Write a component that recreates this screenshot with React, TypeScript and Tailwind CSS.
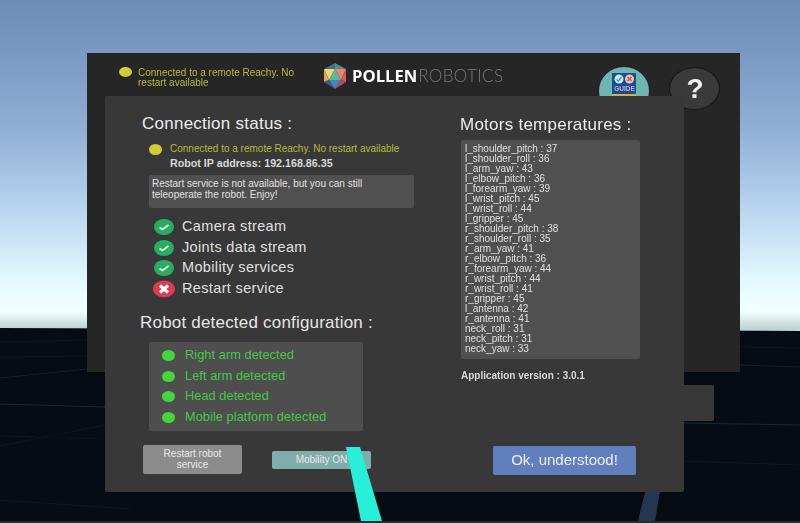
const motors = [
  'l_shoulder_pitch : 37', 'l_shoulder_roll : 36', 'l_arm_yaw : 43', 'l_elbow_pitch : 36',
  'l_forearm_yaw : 39', 'l_wrist_pitch : 45', 'l_wrist_roll : 44', 'l_gripper : 45',
  'r_shoulder_pitch : 38', 'r_shoulder_roll : 35', 'r_arm_yaw : 41', 'r_elbow_pitch : 36',
  'r_forearm_yaw : 44', 'r_wrist_pitch : 44', 'r_wrist_roll : 41', 'r_gripper : 45',
  'l_antenna : 42', 'r_antenna : 41', 'neck_roll : 31', 'neck_pitch : 31', 'neck_yaw : 33',
];

const services = [
  { label: 'Camera stream', ok: true },
  { label: 'Joints data stream', ok: true },
  { label: 'Mobility services', ok: true },
  { label: 'Restart service', ok: false },
];

const parts = ['Right arm detected', 'Left arm detected', 'Head detected', 'Mobile platform detected'];

const StatusIcon = ({ ok }: { ok: boolean }) => (
  <svg width="22" height="18" viewBox="0 0 22 18" className="shrink-0">
    <ellipse cx="11" cy="9" rx={ok ? 10 : 11} ry={ok ? 8 : 8.5} fill={ok ? '#27ae60' : '#dc3c50'} />
    {ok ? (
      <path d="M6.5 9.5 L9.5 11.5 L15.5 7" fill="none" stroke="#f2f2f2" strokeWidth="1.6" />
    ) : (
      <path d="M7 5.5 L15 12.5 M15 5.5 L7 12.5" fill="none" stroke="#ffffff" strokeWidth="3" />
    )}
  </svg>
);

const Logo = () => (
  <svg width="24" height="26" viewBox="0 0 24 26" className="shrink-0">
    <polygon points="12,0 1,6 12,6" fill="#3f6d8c" />
    <polygon points="12,0 23,6 12,6" fill="#4f8f8a" />
    <polygon points="1,6 12,6 6,17" fill="#f3d477" />
    <polygon points="12,6 23,6 18,17" fill="#ee8570" />
    <polygon points="12,6 6,17 18,17" fill="#56b9a0" />
    <polygon points="1,6 6,17 1,19" fill="#e8a25a" />
    <polygon points="23,6 18,17 23,19" fill="#d85a5a" />
    <polygon points="1,19 6,17 12,26" fill="#35608f" />
    <polygon points="6,17 18,17 12,26" fill="#4b82b8" />
    <polygon points="18,17 23,19 12,26" fill="#b84d58" />
  </svg>
);

// the little booklet drawn on the guide button
const GuideMarks = () => (
  <svg width="22" height="10" viewBox="0 0 22 10">
    <circle cx="6" cy="5" r="4.5" fill="#d5e6f0" />
    <path d="M3.5 5.5 L5.5 7 L8.5 3" fill="none" stroke="#3a8fd8" strokeWidth="1.3" />
    <circle cx="16.5" cy="5" r="4.5" fill="#f2c4b4" />
    <path d="M14.5 3 L18.5 7 M18.5 3 L14.5 7" fill="none" stroke="#e04a3a" strokeWidth="1.4" />
  </svg>
);

const SceneGround = () => (
  <svg width="800" height="523" viewBox="0 0 800 523" className="absolute inset-0">
    <polygon points="0,328 800,331 800,523 0,523" fill="#070b13" />
    <path d="M0 378 L87 369" stroke="#151f2c" />
    <path d="M0 404 L105 407" stroke="#1b2838" />
    <path d="M0 446 L105 425" stroke="#0e1520" />
    <path d="M0 436 L105 439" stroke="#0d131d" />
    <path d="M0 500 L130 509" stroke="#10171f" />
    <path d="M0 342 L87 340" stroke="#0e1520" />
    <path d="M0 357 L87 356" stroke="#0e1520" />
    <path d="M684 423 L800 425" stroke="#1b2838" />
    <path d="M684 461 L800 465" stroke="#10171f" />
    <path d="M740 365 L800 367" stroke="#151f2c" />
    <path d="M740 347 L800 348" stroke="#0e1520" />
    <polygon points="645,492 660,492 655,521 638,521" fill="#263650" />
    <rect x="0" y="521" width="800" height="2" fill="#2b2b2b" />
  </svg>
);

export default function App() {
  return (
    <div className="relative w-[800px] h-[523px] overflow-hidden font-['Liberation_Sans',sans-serif] bg-[linear-gradient(180deg,#6c8bb5_0px,#8dabd3_120px,#b4d0ec_200px,#e2f9ff_280px,#f2ffff_312px,#c0d4d4_328px)]">
      <SceneGround />

      {/* back panel */}
      <div className="absolute left-[87px] top-[53px] w-[653px] h-[319px] bg-[#262626] blur-[0.5px]">
        <div className="flex items-start pl-[32px] pt-[10px]">
          <div className="w-[13px] h-[10px] mt-[4px] rounded-[50%] bg-[#cfcf35] shrink-0" />
          <p className="ml-[6px] w-[172px] text-[10px] leading-[10px] mt-[5px] text-[#b9b93b]">
            Connected to a remote Reachy. No restart available
          </p>
          <div className="ml-[13px] flex items-center">
            <Logo />
            <span className="ml-[5px] font-['Open_Sans',sans-serif] font-bold text-[16.6px] leading-[26px] text-white">POLLEN</span>
            <span className="ml-[1px] font-['Lato',sans-serif] font-light text-[17px] leading-[26px] tracking-[0.4px] text-[#7a7a7a]">ROBOTICS</span>
          </div>
          <div className="ml-[96px] mt-[4px] w-[50px] h-[48px] rounded-[50%] bg-[#6fb6b0] flex justify-center pt-[6px] shrink-0">
            <div className="w-[24px] h-[36px] bg-[#0f5299] flex flex-col items-center pt-[1px]">
              <GuideMarks />
              <span className="text-[6.5px] leading-[8px] mt-[1px] font-bold text-[#e7a5c0]">GUIDE</span>
              <span className="w-full h-[2px] mt-[1px] bg-[#e8a93a]" />
            </div>
          </div>
          <div className="ml-[20px] mt-[4px] w-[51px] h-[43px] rounded-[50%] bg-[#3a3a3a] border border-[#151515] flex items-center justify-center font-bold text-[28px] text-[#f0f0f0] shrink-0">
            ?
          </div>
        </div>
      </div>

      {/* small box sticking out behind the main panel */}
      <div className="absolute left-[680px] top-[385px] w-[34px] h-[36px] rounded-[2px] bg-[#383838]" />

      {/* main panel */}
      <div className="absolute left-[105px] top-[96px] w-[579px] h-[396px] rounded-[2px] bg-[#383838] text-[#e6e6e6] blur-[0.5px]">
        <div className="flex h-full">
          <div className="w-[355px] shrink-0 pl-[37px] pt-[18px]">
            <h2 className="text-[17px] leading-[20px] tracking-[0.25px] text-[#ececec]">Connection status :</h2>
            <div className="flex items-center mt-[9px] pl-[7px]">
              <div className="w-[13px] h-[11px] rounded-[50%] bg-[#cfcf35] shrink-0" />
              <span className="ml-[8px] text-[10px] leading-[12px] text-[#b9b93b]">
                Connected to a remote Reachy. No restart available
              </span>
            </div>
            <p className="ml-[28px] mt-[2px] text-[10.7px] leading-[12px] font-bold text-[#d8d8d8]">Robot IP address: 192.168.86.35</p>
            <div className="ml-[7px] mt-[6px] w-[265px] h-[33px] rounded-[2px] bg-[#505050] pl-[3px] pr-[40px] pt-[3px] text-[10px] leading-[11px] text-[#e0e0e0]">
              Restart service is not available, but you can still teleoperate the robot. Enjoy!
            </div>
            <ul className="mt-[10px] ml-[11px] flex flex-col gap-[2.6px]">
              {services.map((s) => (
                <li key={s.label} className="flex items-center h-[18px] text-[14.5px] tracking-[0.35px] text-[#e0e0e0]">
                  <StatusIcon ok={s.ok} />
                  <span className="ml-[7px]">{s.label}</span>
                </li>
              ))}
            </ul>
            <h2 className="-ml-[2px] mt-[15px] text-[17px] leading-[20px] tracking-[0.2px] text-[#e6e6e6]">Robot detected configuration :</h2>
            <div className="ml-[7px] mt-[9px] w-[214px] h-[89px] rounded-[2px] bg-[#4e4e4e] pl-[13px] pt-[4px] flex flex-col gap-[0.5px]">
              {parts.map((p) => (
                <div key={p} className="flex items-center h-[20px] text-[12.7px] text-[#46c846]">
                  <span className="w-[13px] h-[11px] rounded-[50%] bg-[#45d63c] shrink-0" />
                  <span className="ml-[10px] tracking-[0.1px]">{p}</span>
                </div>
              ))}
            </div>
            <div className="flex items-center mt-[14px] ml-[1px]">
              <button className="w-[99px] h-[29px] rounded-[2px] bg-[#8c8c8c] pt-[1px] text-[10px] leading-[10.5px] text-[#e8e8e8]">
                Restart robot
                <br />
                service
              </button>
              <button className="ml-[30px] mt-[1px] w-[99px] h-[18px] rounded-[2px] bg-[#7fadaa] text-[10px] text-[#e8e8e8]">
                Mobility ON
              </button>
            </div>
          </div>
          <div className="flex-1 pt-[19px] relative">
            <h2 className="text-[17px] leading-[20px] tracking-[0.25px] text-[#ececec]">Motors temperatures :</h2>
            <div className="ml-[1px] mt-[5px] w-[179px] h-[219px] rounded-[2px] bg-[#505050] pl-[4px] pt-[4px] text-[10px] leading-[10px] text-[#e0e0e0]">
              {motors.map((m) => (
                <div key={m}>{m}</div>
              ))}
            </div>
            <p className="ml-[1px] mt-[11px] text-[10px] leading-[12px] font-bold text-[#d8d8d8]">Application version : 3.0.1</p>
            <div className="flex justify-end pr-[48px] mt-[64px]">
              <button className="w-[143px] h-[29px] rounded-[2px] bg-[#5f7fbd] text-[15px] text-[#eeeeee]">Ok, understood!</button>
            </div>
          </div>
        </div>
      </div>

      {/* pointer ray of the controller */}
      <svg width="800" height="523" viewBox="0 0 800 523" className="absolute inset-0 pointer-events-none">
        <polygon points="346,447 360,447 382,521 361,521" fill="#28f0d8" />
      </svg>
    </div>
  );
}
